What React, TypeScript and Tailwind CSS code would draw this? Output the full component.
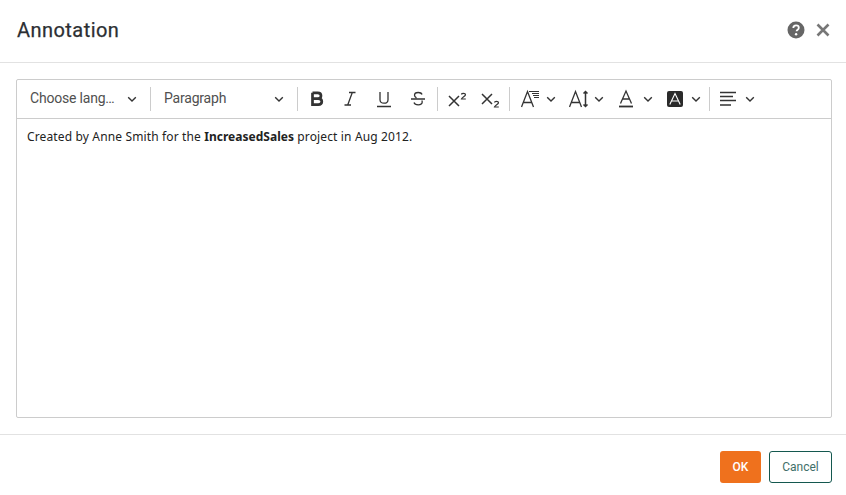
import type { ReactNode } from "react";

function Chevron({ className = "" }: { className?: string }) {
  return (
    <svg className={`h-[10px] w-[10px] shrink-0 ${className}`} viewBox="0 0 10 10" fill="none" stroke="#333" strokeWidth={1.4}>
      <path d="M1.200 3.200L5 7l3.800-3.800" />
    </svg>
  );
}

function Sep({ className = "" }: { className?: string }) {
  return <div className={`h-[24px] w-px shrink-0 bg-[#ccc] ${className}`} />;
}

function Icon({ children, w = 18 }: { children: ReactNode; w?: number }) {
  return (
    <svg width={w} height={20} viewBox={`0 0 ${w} 20`} fill="none" stroke="#333" strokeWidth={1.3} className="shrink-0">
      {children}
    </svg>
  );
}

function ToolBtn({ children, className = "" }: { children: ReactNode; className?: string }) {
  return <button className={`flex h-[30px] shrink-0 items-center justify-center ${className}`}>{children}</button>;
}

export default function App() {
  return (
    <div className="flex h-[495px] w-full flex-col bg-white font-['Roboto',sans-serif] text-[#333]">
      {/* Header */}
      <header className="flex h-[63px] shrink-0 items-center justify-between border-b border-[#e2e2e2] pb-[2px] pl-[17px] pr-[15px]">
        <h1 className="text-[20px] font-normal tracking-[0.45px] text-[#2c2f33] [-webkit-text-stroke:0.25px_#2c2f33]">Annotation</h1>
        <div className="flex items-center gap-[10px]">
          <svg width="18" height="18" viewBox="0 0 18 18">
            <circle cx="9" cy="9" r="8.500" fill="#666" />
            <path d="M6.300 7c0-1.600 1.200-2.600 2.800-2.600s2.700.9 2.700 2.300c0 2-2.200 2-2.200 3.600" fill="none" stroke="#fff" strokeWidth="1.800" />
            <circle cx="9.100" cy="13.200" r="1.200" fill="#fff" />
          </svg>
          <svg width="16" height="16" viewBox="0 0 16 16" stroke="#777" strokeWidth="2.600" fill="none">
            <path d="M2.500 2.500l11 11M13.500 2.500l-11 11" />
          </svg>
        </div>
      </header>

      {/* Body */}
      <main className="flex min-h-0 flex-1 flex-col pb-4 pl-4 pr-[14px] pt-4">
        <div className="flex min-h-0 flex-1 flex-col rounded-[2px] border border-[#ccc]">
          <div className="flex h-[39px] shrink-0 items-center border-b border-[#ccc]">
            <div className="flex w-[133px] shrink-0 items-center pl-[13px] text-[14px] tracking-[-0.2px] text-[#505050]">
              <span className="mb-[2px] w-[97px]">Choose lang…</span>
              <Chevron />
            </div>
            <Sep />
            <div className="flex w-[146px] shrink-0 items-center pl-[13px] text-[14px] tracking-[-0.2px] text-[#505050]">
              <span className="mb-[2px] w-[110px]">Paragraph</span>
              <Chevron />
            </div>
            <Sep />

            <ToolBtn className="ml-[2px] w-[33.5px]">
              <Icon w={14}>
                <path d="M2.500 3.800h5.200c2 0 3.300 1 3.300 2.900S9.700 9.600 7.700 9.600H2.500M2.500 9.600h5.800c2.200 0 3.500 1.100 3.500 3s-1.300 3.100-3.500 3.100H2.500V3.800z" strokeWidth={2.700} />
              </Icon>
            </ToolBtn>
            <ToolBtn className="w-[33.5px]">
              <Icon w={12}>
                <path d="M5 3.500h6.500M0.500 16h6.500M8.300 3.500L3.700 16" />
              </Icon>
            </ToolBtn>
            <ToolBtn className="w-[33.5px]">
              <Icon w={14}>
                <path d="M3 3v7.700c0 2.300 1.500 3.500 4 3.500s4-1.200 4-3.500V3M0 17.500h14" />
              </Icon>
            </ToolBtn>
            <ToolBtn className="w-[33.5px] pl-[1px]">
              <Icon w={14}>
                <path d="M11 5.500C10.500 4.200 9 3.500 7.200 3.500 5 3.500 3.500 4.500 3.500 6.200c0 1.300.8 2 2 2.600M0 10h14M10.800 11.500c.3.500.4 1 .4 1.500 0 1.800-1.700 2.800-4 2.800-2 0-3.700-.8-4.200-2.300" />
              </Icon>
            </ToolBtn>

            <Sep className="ml-[3px]" />

            <ToolBtn className="ml-[2.500px] w-[33px]">
              <Icon w={19}>
                <path d="M1 7l10 10M11 7L1 17" strokeWidth={1.500} />
                <path d="M13.500 5.500c0-1.500 4-1.700 4 .2 0 1.500-3.500 2.500-4 4.300h4.300" strokeWidth={1.200} />
              </Icon>
            </ToolBtn>
            <ToolBtn className="w-[33px]">
              <Icon w={19}>
                <path d="M1 5l10 10M11 5L1 15" strokeWidth={1.500} />
                <path d="M13.500 13.500c0-1.500 4-1.700 4 .2 0 1.500-3.500 2.500-4 4.300h4.300" strokeWidth={1.200} />
              </Icon>
            </ToolBtn>

            <Sep className="ml-[2.500px]" />

            <ToolBtn className="ml-[11px] gap-[7px]">
              <Icon w={18}>
                <path d="M0.500 18L6.500 2.500 12.500 18M2.500 13.500h8" />
                <path d="M8 2.500h10M11 4.500h7M12 6.500h6M13 8.500h5" strokeWidth={1} />
              </Icon>
              <Chevron />
            </ToolBtn>
            <ToolBtn className="ml-[13px] gap-[5px]">
              <Icon w={20}>
                <path d="M0.500 18L6.500 2.500 12.500 18M2.500 13.500h8" />
                <path d="M16.500 2.500v15M14.500 4.500L16.500 2.500 18.500 4.500M14.500 15.500L16.500 17.500 18.500 15.500" strokeWidth={1.500} />
              </Icon>
              <Chevron />
            </ToolBtn>
            <ToolBtn className="ml-[15px] gap-[10px]">
              <Icon w={14}>
                <path d="M1.500 14.500L7 2 12.500 14.500M3.300 10h7.400" />
                <path d="M0 17.500h14" strokeWidth={1.800} />
              </Icon>
              <Chevron />
            </ToolBtn>
            <ToolBtn className="ml-[14px] gap-[8px]">
              <svg width="16" height="16" viewBox="0 0 16 16" fill="none" className="shrink-0">
                <rect width="16" height="16" rx="2" fill="#2a2a2a" />
                <path d="M2.800 13.500L8 2.500l5.200 11M4.500 10h7" stroke="#fff" strokeWidth={1.100} />
              </svg>
              <Chevron />
            </ToolBtn>

            <Sep className="ml-[8px]" />

            <ToolBtn className="ml-[10px] gap-[9px]">
              <Icon w={16}>
                <path d="M0 3.500h16M0 7.500h13M0 11.500h16M0 16h11" />
              </Icon>
              <Chevron />
            </ToolBtn>
          </div>

          <div className="flex-1 px-[10px] pt-[9px] font-['Noto_Sans',sans-serif] text-[12px] leading-[17px] tracking-[0.14px] text-[#222]">
            Created by Anne Smith for the <b className="font-bold tracking-[0.02px]">IncreasedSales</b> project in Aug 2012.
          </div>
        </div>
      </main>

      {/* Footer */}
      <footer className="flex h-[61px] shrink-0 items-start justify-end gap-2 border-t border-[#e2e2e2] px-[14px] pt-4">
        <button className="h-[32px] w-[41px] rounded-[3px] bg-[#ef711d] text-[12px] font-medium text-white">OK</button>
        <button className="h-[32px] w-[63px] rounded-[3px] border border-[#14584f] bg-white text-[12px] text-[#3f6f69]">Cancel</button>
      </footer>
    </div>
  );
}
